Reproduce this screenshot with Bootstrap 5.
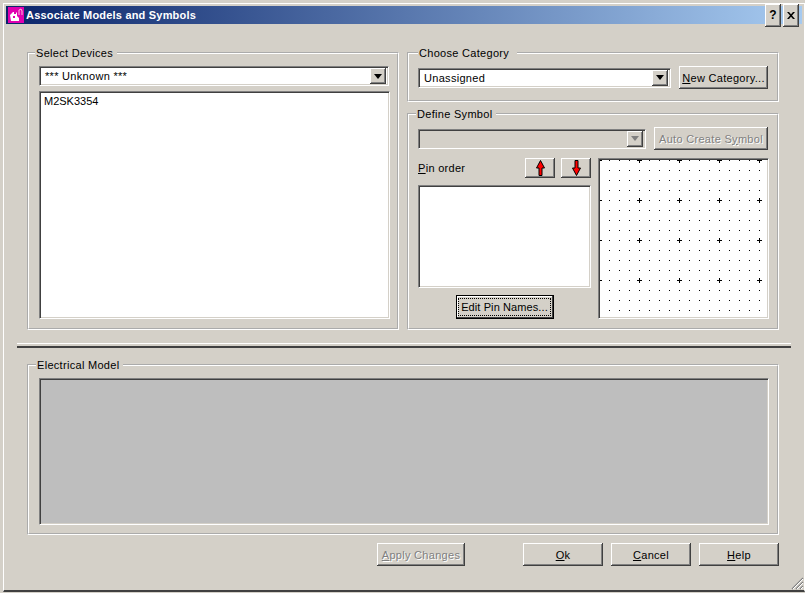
<!DOCTYPE html>
<html lang="en">
<head>
<meta charset="utf-8">
<title>Associate Models and Symbols</title>
<link href="https://cdn.jsdelivr.net/npm/bootstrap@5.3.0/dist/css/bootstrap.min.css" rel="stylesheet">
<style>
html,body{margin:0;background:#d4d0c8;}
body{font:11px/14px "Liberation Sans",Arial,sans-serif;color:#000;letter-spacing:.3px;overflow:hidden;}
.dlg{width:805px;height:593px;padding:3px 0 1px 3px;}
.dlg-in{height:100%;border-top:1px solid #fff;border-left:1px solid #fff;border-right:1px solid #fff;border-bottom:2px solid #404040;padding:2px 2px 0 2px;position:relative;}
.ttl{height:18px;background:linear-gradient(90deg,#0a246a,#a6caf0);color:#fff;font-weight:700;font-size:11px;letter-spacing:.2px;}
.ttl-ic{width:16px;height:16px;margin:0 2px 0 2px;}
.cap{width:16px;height:14px;font:700 12px/13px "Liberation Sans",sans-serif;color:#000;}
.cap-q{margin-right:2px;}
.cap-x{margin-right:3px;}
.body-wrap{padding-left:21px;width:752px;box-sizing:content-box;}
fieldset.grp{border:2px groove #fff;padding:6px 9px 0 9px;margin:0;min-width:0;width:372px;}
fieldset.grp legend{float:none;width:auto;font-size:11px;line-height:14px;margin:0 0 0 -3px;padding:0 4px 0 1px;}
fieldset.g-cat legend{margin-left:0;padding-right:8px;}
fieldset.g-dev{height:284px;padding-left:10px;}
fieldset.g-dev legend{margin-left:-4px;}
fieldset.g-cat{height:56px;}
fieldset.g-sym{height:223px;margin-top:5px;}
fieldset.g-sym legend{margin-left:-2px;}
.top{margin-top:22px;}
.sunk{background:#fff;border:1px solid;border-color:#808080 #fff #fff #808080;box-shadow:inset 1px 1px 0 #404040,inset -1px -1px 0 #d4d0c8;}
.cmb{height:20px;padding:2px 2px 2px 5px;}
.cmb.off{background:#d4d0c8;}
.cmb-a{width:16px;height:16px;flex:none;}
.w-btn{--bs-btn-padding-x:0;--bs-btn-padding-y:0;--bs-btn-border-width:0;--bs-btn-border-radius:0;--bs-btn-font-size:11px;--bs-btn-line-height:14px;--bs-btn-color:#000;--bs-btn-bg:#d4d0c8;--bs-btn-hover-bg:#d4d0c8;--bs-btn-hover-color:#000;--bs-btn-disabled-bg:#d4d0c8;--bs-btn-disabled-color:#808080;--bs-btn-disabled-opacity:1;letter-spacing:.3px;height:23px;box-shadow:inset -1px -1px 0 #404040,inset 1px 1px 0 #fff,inset -2px -2px 0 #808080;display:flex;align-items:center;justify-content:center;flex:none;white-space:nowrap;}
.w-btn:disabled{text-shadow:1px 1px 0 #fff;}
.cmb-a.w-btn{height:16px;}
.b-new{width:89px;}
.b-auto{width:114px;}
.b-arr{width:30px;height:20px;}
.b-edit{width:98px;height:24px;letter-spacing:.1px;box-shadow:0 0 0 1px #000 inset,inset -2px -2px 0 #404040,inset 2px 2px 0 #fff;}
.b-edit span{outline:1px dotted #000;padding:1px 2px;}
.b-act{width:80px;}
.b-apply{width:88px;margin-right:50px;}
.devsel{width:350px;}
.devlist{width:351px;height:228px;margin-top:5px;padding:2px 4px;letter-spacing:0;}
.catsel{width:253px;}
.symsel{width:228px;}
.pin-row{margin-top:8px;}
.pin-gap{gap:6px;}
.pinlist{width:173px;height:103px;margin-top:7px;}
.edit-row{margin-top:7px;}
.canvas{width:171px;height:161px;flex:none;display:block;margin-right:-1px;}
.sep{height:5px;width:774px;margin:13px 0 10px -10px;border-top:1px solid #fff;border-bottom:2px solid #404040;}
fieldset.wide{width:752px;height:177px;padding-top:6px;padding-left:10px;}
.gray{height:147px;width:730px;background:#bebebe;}
.foot{margin-top:8px;width:752px;}
.grip{position:absolute;right:0;bottom:0;width:14px;height:14px;}
</style>
</head>
<body>
<div class="dlg">
<div class="dlg-in d-flex flex-column">
  <div class="ttl d-flex align-items-center">
    <svg class="ttl-ic" viewBox="0 0 16 16"><rect width="16" height="16" fill="#e000b0"/><path d="M2 8 5 5h1v2h2V5l1 1v3l2 2v3H3z" fill="#fff"/><path d="M11 8V3l2-1 1 2v4" fill="none" stroke="#fbd" /><rect x="5" y="9" width="2" height="2" fill="#e000b0"/></svg>
    <span class="flex-grow-1">Associate Models and Symbols</span>
    <button class="btn w-btn cap cap-q" type="button">?</button>
    <button class="btn w-btn cap cap-x" type="button"><svg width="8" height="7" viewBox="0 0 8 7"><path d="M0 0h2l2 2.3L6 0h2L5 3.5 8 7H6L4 4.7 2 7H0l3-3.5z" fill="#000"/></svg></button>
  </div>
  <div class="body-wrap">
    <div class="top d-flex gap-2 w-100">
      <fieldset class="grp g-dev">
        <legend>Select Devices</legend>
        <div class="sunk cmb devsel d-flex align-items-center"><span class="flex-grow-1">*** Unknown ***</span><button class="btn w-btn cmb-a" type="button"><svg width="8" height="5" viewBox="0 0 8 5"><path d="M0 0h8L4 5z" fill="#000"/></svg></button></div>
        <div class="sunk devlist">M2SK3354</div>
      </fieldset>
      <div class="d-flex flex-column">
        <fieldset class="grp g-cat">
          <legend>Choose Category</legend>
          <div class="d-flex justify-content-between align-items-center">
            <div class="sunk cmb catsel d-flex align-items-center"><span class="flex-grow-1">Unassigned</span><button class="btn w-btn cmb-a" type="button"><svg width="8" height="5" viewBox="0 0 8 5"><path d="M0 0h8L4 5z" fill="#000"/></svg></button></div>
            <button class="btn w-btn b-new" type="button"><span><u>N</u>ew Category...</span></button>
          </div>
        </fieldset>
        <fieldset class="grp g-sym">
          <legend>Define Symbol</legend>
          <div class="d-flex justify-content-between align-items-center">
            <div class="sunk cmb off symsel d-flex align-items-center"><span class="flex-grow-1"></span><button class="btn w-btn cmb-a" type="button" disabled><svg width="8" height="5" viewBox="0 0 8 5"><path d="M0 0h8L4 5z" fill="#808080"/></svg></button></div>
            <button class="btn w-btn b-auto" type="button" disabled><span>Auto Create S<u>y</u>mbol</span></button>
          </div>
          <div class="d-flex justify-content-between pin-row">
            <div class="d-flex flex-column">
              <div class="d-flex align-items-center justify-content-between">
                <span><u>P</u>in order</span>
                <div class="d-flex pin-gap ms-auto">
                  <button class="btn w-btn b-arr" type="button"><svg width="9" height="16" viewBox="0 0 9 16"><path d="M4.5 .5 8.5 8H6v7.5H3V8H.5z" fill="#f00" stroke="#000"/></svg></button>
                  <button class="btn w-btn b-arr" type="button"><svg width="9" height="16" viewBox="0 0 9 16"><path d="M4.5 15.5 8.5 8H6V.5H3V8H.5z" fill="#f00" stroke="#000"/></svg></button>
                </div>
              </div>
              <div class="sunk pinlist"></div>
              <div class="d-flex justify-content-center edit-row"><button class="btn w-btn b-edit" type="button"><span>Edit Pin Names...</span></button></div>
            </div>
            <svg class="canvas sunk" viewBox="0 0 169 159">
              <defs>
                <pattern id="dots" x="0" y="1" width="10" height="10" patternUnits="userSpaceOnUse"><rect width="1" height="1" fill="#000"/></pattern>
                <pattern id="plus" x="-2" y="-1" width="40" height="40" patternUnits="userSpaceOnUse"><path d="M2 0h1v5H2zM0 2h5v1H0z" fill="#000"/></pattern>
              </defs>
              <rect width="169" height="159" fill="url(#dots)"/>
              <rect width="169" height="159" fill="url(#plus)"/>
              <path d="M.5 0v159M0 .5h169" stroke="#404040"/>
            </svg>
          </div>
        </fieldset>
      </div>
    </div>
    <div class="sep"></div>
    <fieldset class="grp wide">
      <legend>Electrical Model</legend>
      <div class="sunk gray"></div>
    </fieldset>
    <div class="foot d-flex justify-content-end gap-2">
      <button class="btn w-btn b-apply" type="button" disabled><span><u>A</u>pply Changes</span></button>
      <button class="btn w-btn b-act" type="button"><span><u>O</u>k</span></button>
      <button class="btn w-btn b-act" type="button"><span><u>C</u>ancel</span></button>
      <button class="btn w-btn b-act" type="button"><span><u>H</u>elp</span></button>
    </div>
  </div>
  <svg class="grip" viewBox="0 0 14 14"><path d="M13 2 2 13M13 6 6 13M13 10l-3 3" stroke="#808080" stroke-width="1.2"/><path d="M13 3 3 13M13 7l-6 6M13 11l-2 2" stroke="#fff"/></svg>
</div>
</div>
</body>
</html>
